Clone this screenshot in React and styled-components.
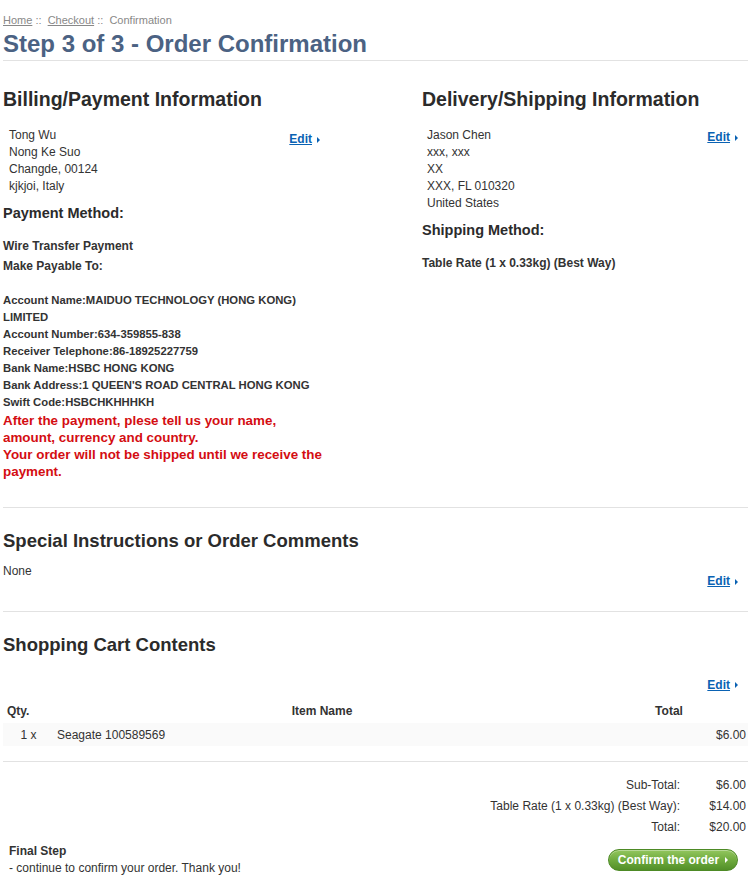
import React from 'react';
import styled, { createGlobalStyle } from 'styled-components';

const GlobalStyle = createGlobalStyle`
  body {
    margin: 0;
    background: #fff;
    font-family: "Liberation Sans", Arial, sans-serif;
    font-size: 12px;
    color: #333;
  }
`;

const Page = styled.div`
  padding: 0 2px 0 3px;
`;

const Breadcrumb = styled.div`
  margin-top: 13px;
  font-size: 11px;
  line-height: 14px;
  color: #888;

  a {
    color: #888;
    text-decoration: underline;
  }
`;

const Title = styled.h1`
  margin: 3px 0 0;
  padding-bottom: 2px;
  border-bottom: 1px solid #e2e2e2;
  font-size: 24px;
  line-height: 28px;
  font-weight: bold;
  color: #4b6283;
`;

const Columns = styled.div`
  display: grid;
  grid-template-columns: 326px 326px;
  justify-content: space-between;
  margin-top: 27px;
`;

const Column = styled.div``;

const Heading = styled.h2`
  margin: 0;
  font-size: ${(p) => p.$size || 18.5}px;
  line-height: 22px;
  font-weight: bold;
  color: #2b2b2b;
`;

const AddressRow = styled.div`
  display: flex;
  justify-content: space-between;
  align-items: flex-start;
  margin-top: 17px;
  padding: 0 ${(p) => p.$right || 10}px 0 ${(p) => p.$indent || 6}px;
`;

const Lines = styled.div`
  font-size: ${(p) => p.$size || 12}px;
  line-height: 17px;
  font-weight: ${(p) => (p.$bold ? 'bold' : 'normal')};
  margin-top: ${(p) => p.$top || 0}px;
`;

const EditLink = styled.a`
  display: inline-flex;
  align-items: center;
  margin-top: ${(p) => p.$top || 0}px;
  font-weight: bold;
  font-size: 12px;
  line-height: 17px;
  color: #0a62b3;
  text-decoration: underline;
  cursor: pointer;

  &::after {
    content: '';
    margin-left: 5px;
    border-left: 3px solid #0a62b3;
    border-top: 3px solid transparent;
    border-bottom: 3px solid transparent;
  }
`;

const SubHeading = styled.h3`
  margin: 9px 0 0;
  font-size: 14.5px;
  line-height: 18px;
  font-weight: bold;
  color: #2b2b2b;
`;

const Notice = styled.div`
  margin-top: 1px;
  font-size: 13.4px;
  line-height: 17px;
  font-weight: bold;
  color: #d40d12;
`;

const Section = styled.section`
  margin-top: ${(p) => p.$top}px;
  padding-top: ${(p) => (p.$pad === undefined ? 22 : p.$pad)}px;
  border-top: 1px solid #e2e2e2;
`;

const CommentRow = styled.div`
  display: flex;
  justify-content: space-between;
  align-items: flex-start;
  margin-top: 11px;
  padding-right: 10px;
  line-height: 17px;
`;

const EditRow = styled.div`
  display: flex;
  justify-content: flex-end;
  margin-top: 20.5px;
  padding-right: 10px;
`;

const Table = styled.table`
  width: 100%;
  margin-top: 6px;
  border-collapse: collapse;

  th {
    height: 23px;
    padding: 0;
    font-weight: bold;
    text-align: center;
    vertical-align: middle;
  }

  td {
    height: 21px;
    padding: 0;
    background: #fafafa;
    vertical-align: middle;
  }
`;

const QtyHead = styled.th`
  width: 47px;
  && {
    text-align: left;
    padding-left: 4px;
  }
`;

const TotalHead = styled.th`
  width: 158px;
`;

const QtyCell = styled.td`
  text-align: center;
  && {
    padding-top: 2px;
  }
`;

const NameCell = styled.td`
  && {
    padding: 2px 0 0 3px;
  }
`;

const PriceCell = styled.td`
  text-align: right;
  && {
    padding: 2px 2px 0 0;
  }
`;

const Totals = styled.div`
  display: grid;
  grid-template-columns: auto 66px;
  justify-content: end;
  padding-right: 2px;
  line-height: 21px;
  text-align: right;
`;

const Footer = styled.div`
  display: flex;
  justify-content: space-between;
  align-items: flex-start;
  margin-top: 5px;
  padding: 0 10px 0 6px;
  line-height: 17px;
`;

const Strong = styled.div`
  font-weight: bold;
`;

const ConfirmButton = styled.button`
  display: inline-flex;
  align-items: center;
  justify-content: center;
  margin-top: 6px;
  width: 130px;
  height: 22px;
  padding: 0;
  border: 1px solid #4d8a25;
  border-radius: 11px;
  background: linear-gradient(#92c65e 0%, #6fab3e 50%, #528f28 100%);
  box-shadow: inset 0 1px 0 rgba(255, 255, 255, 0.35);
  font-family: "Liberation Sans", Arial, sans-serif;
  font-size: 12px;
  font-weight: bold;
  color: #fff;
  cursor: pointer;

  &::after {
    content: '';
    margin-left: 6px;
    border-left: 3px solid #fff;
    border-top: 3px solid transparent;
    border-bottom: 3px solid transparent;
  }
`;

const bank = [
  'Account Name:MAIDUO TECHNOLOGY (HONG KONG) LIMITED',
  'Account Number:634-359855-838',
  'Receiver Telephone:86-18925227759',
  'Bank Name:HSBC HONG KONG',
  "Bank Address:1 QUEEN'S ROAD CENTRAL HONG KONG",
  'Swift Code:HSBCHKHHHKH',
];

const totals = [
  ['Sub-Total:', '$6.00'],
  ['Table Rate (1 x 0.33kg) (Best Way):', '$14.00'],
  ['Total:', '$20.00'],
];

const App = () => {
  return (
    <>
      <GlobalStyle />
      <Page>
        <Breadcrumb>
          <a>Home</a> ::&nbsp; <a>Checkout</a> ::&nbsp; Confirmation
        </Breadcrumb>
        <Title>Step 3 of 3 - Order Confirmation</Title>

        <Columns>
          <Column>
            <Heading $size={19.5}>Billing/Payment Information</Heading>
            <AddressRow $right={9}>
              <Lines>
                Tong Wu<br />
                Nong Ke Suo<br />
                Changde, 00124<br />
                kjkjoi, Italy
              </Lines>
              <EditLink $top={4}>Edit</EditLink>
            </AddressRow>
            <SubHeading>Payment Method:</SubHeading>
            <Lines $bold $top={16}>Wire Transfer Payment</Lines>
            <Lines $bold $top={3}>Make Payable To:</Lines>
            <Lines $bold $size={11.3} $top={17}>
              {bank.map((line) => (
                <div key={line}>{line}</div>
              ))}
            </Lines>
            <Notice>
              After the payment, plese tell us your name, amount, currency and country.
              <br />
              Your order will not be shipped until we receive the payment.
            </Notice>
          </Column>

          <Column>
            <Heading $size={19.5}>Delivery/Shipping Information</Heading>
            <AddressRow $indent={5}>
              <Lines>
                Jason Chen<br />
                xxx, xxx<br />
                XX<br />
                XXX, FL 010320<br />
                United States
              </Lines>
              <EditLink $top={2}>Edit</EditLink>
            </AddressRow>
            <SubHeading>Shipping Method:</SubHeading>
            <Lines $bold $top={16}>Table Rate (1 x 0.33kg) (Best Way)</Lines>
          </Column>
        </Columns>

        <Section $top={27}>
          <Heading>Special Instructions or Order Comments</Heading>
          <CommentRow>
            <div>None</div>
            <EditLink $top={10}>Edit</EditLink>
          </CommentRow>
        </Section>

        <Section $top={21}>
          <Heading>Shopping Cart Contents</Heading>
          <EditRow>
            <EditLink>Edit</EditLink>
          </EditRow>
          <Table>
            <thead>
              <tr>
                <QtyHead>Qty.</QtyHead>
                <th>Item Name</th>
                <TotalHead>Total</TotalHead>
              </tr>
            </thead>
            <tbody>
              <tr>
                <QtyCell>1 x</QtyCell>
                <NameCell>Seagate 100589569</NameCell>
                <PriceCell>$6.00</PriceCell>
              </tr>
            </tbody>
          </Table>
        </Section>

        <Section $top={15.5} $pad={13}>
          <Totals>
            {totals.map(([label, value]) => (
              <React.Fragment key={label}>
                <div>{label}</div>
                <div>{value}</div>
              </React.Fragment>
            ))}
          </Totals>
          <Footer>
            <div>
              <Strong>Final Step</Strong>
              <div>- continue to confirm your order. Thank you!</div>
            </div>
            <ConfirmButton>Confirm the order</ConfirmButton>
          </Footer>
        </Section>
      </Page>
    </>
  );
};

export default App;
